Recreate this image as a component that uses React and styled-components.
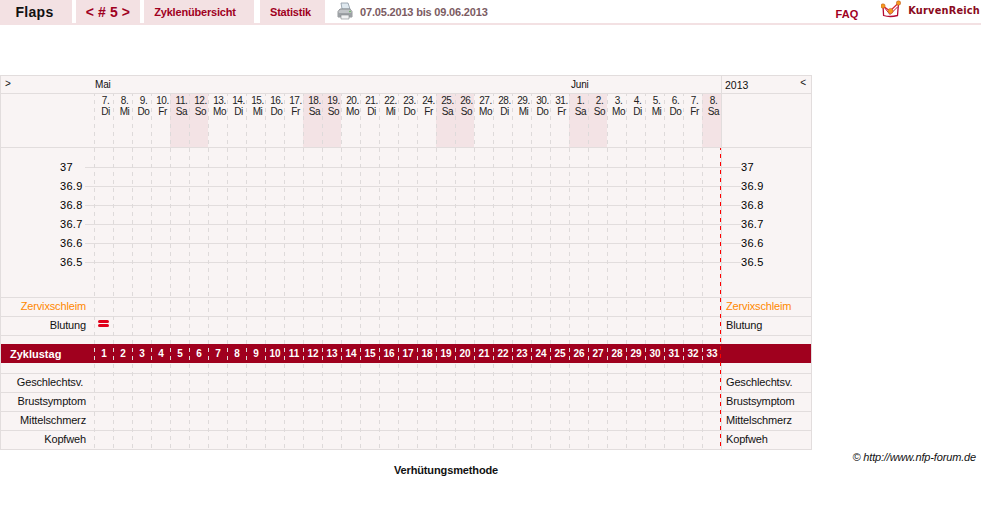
import React from 'react';
import styled, { createGlobalStyle } from 'styled-components';

const Global = createGlobalStyle`
  html, body { margin: 0; padding: 0; background: #fff; }
  body { font-family: "Liberation Sans", Arial, sans-serif; font-size: 11px; color: #111; }
`;
const Page = styled.div`width: 981px; height: 529px; overflow: hidden;`;
const TopBar = styled.header`
  display: flex; align-items: stretch; height: 23px;
  border-bottom: 2px solid #f3e1e3; margin-bottom: 50px;
`;
const Tab = styled.a`
  display: flex; align-items: center; justify-content: center;
  box-sizing: border-box; padding-right: ${p => p.$pr || 0}px;
  width: ${p => p.$w}px; margin-right: ${p => p.$gap}px;
  background: #f3e1e3; color: ${p => p.$dark ? '#111' : '#a0001e'};
  font-weight: bold; font-size: ${p => p.$size || 11}px;
  letter-spacing: ${p => p.$ls || 0}px;
`;
const PrinterWrap = styled.div`display: flex; align-items: center; margin-left: 12px; margin-right: 7px;`;
const Range = styled.span`
  align-self: center; font-weight: bold; color: #7b5b62; font-size: 11px; letter-spacing: -0.18px;
`;
const Spacer = styled.div`flex: 1;`;
const Faq = styled.a`
  align-self: flex-end; color: #a0001e; font-weight: bold; font-size: 11px;
  margin-right: 23px; margin-bottom: 3px;
`;
const Logo = styled.div`display: flex; align-items: flex-start; margin-right: 1px;`;
const LogoText = styled.span`
  font-family: "DejaVu Sans", sans-serif; font-weight: bold; font-size: 9.8px; color: #8a0a20;
  margin-left: 7px; margin-top: 5px; letter-spacing: 0.2px;
`;

const Table = styled.div`
  position: relative; box-sizing: border-box; width: 812px;
  border: 1px solid #e2dddd; border-bottom: none; background: #f9f4f4;
`;
const Row = styled.div`
  display: grid; grid-template-columns: 93px repeat(33, 19px) 90px;
  height: ${p => p.$h}px; box-sizing: border-box;
  border-bottom: ${p => p.$noline ? 'none' : '1px solid #e2dddd'};
  background: ${p => p.$red ? '#a0001e' : 'transparent'};
  ${p => p.$red ? 'color:#fff;font-weight:bold;' : ''}
`;
const Side = styled.div`
  display: flex; align-items: center; font-size: 11px; white-space: pre;
  letter-spacing: -0.15px;
  color: ${p => p.$orange ? '#ff8800' : 'inherit'};
  justify-content: ${p => p.$end ? 'flex-start' : 'flex-end'};
  padding: ${p => p.$end ? '0 0 2px 4px' : '0 8px 2px 0'};
  box-sizing: border-box;
  ${p => p.$end ? 'border-left: 1px solid #e2dddd;' : ''}
`;
const Band = styled.div`grid-column: 35; border-left: 1px solid #e2dddd;`;
const RedTitle = styled.div`display: flex; align-items: center; padding-left: 9px; font-size: 11px;`;
const Cell = styled.div`display: flex; align-items: center; justify-content: center;`;
const NumCell = styled(Cell)`font-size: 10px; padding-left: 1px;`;
const Corner = styled.div`display: flex; align-items: flex-start; padding: 2px 0 0 4px; font-size: 10px;`;
const MonthRow = styled.div`
  display: flex; grid-column: 2 / span 33; font-size: 10px; letter-spacing: -0.2px; align-items: center;
`;
const Month = styled.span`width: ${p => p.$w}px; padding-left: 1px;`;
const YearCell = styled.div`
  display: flex; justify-content: space-between; align-items: center; padding: 0 5px 0 3px;
  border-left: 1px solid #e2dddd; font-size: 10.5px;
`;
const Arrow = styled.span`font-size: 10px; margin-top: -4px;`;
const DayCell = styled.div`
  display: flex; flex-direction: column; align-items: center; padding: 1px 0 0 4px;
  font-size: 10px; line-height: 11px; letter-spacing: -0.45px; color: #222;
  background: ${p => p.$we ? '#f3e3e5' : 'transparent'};
`;
const Chart = styled.div`
  height: 150px; box-sizing: border-box; padding-top: 10px; border-bottom: 1px solid #e2dddd;
  position: relative;
`;
const TempRow = styled.div`
  display: flex; align-items: center; height: 19px; font-size: 11px; letter-spacing: 0.3px; color: #000;
`;
const TempLeft = styled.div`width: 84px; padding: 0 0 2px 59px; box-sizing: border-box;`;
const TempRight = styled.div`width: 70px; padding-bottom: 2px; box-sizing: border-box;`;
const TempLine = styled.div`flex: 1; height: 1px; background: #e2dddd;`;
const ChartEdge = styled.div`position: absolute; left: 720px; top: 0; bottom: 0; width: 1px; background: #e2dddd;`;
const Dashes = styled.div`
  position: absolute; left: 93px; top: 18px; bottom: 0; display: flex; pointer-events: none;
`;
const DashCol = styled.div`
  width: 19px;
  background-image: repeating-linear-gradient(to bottom, #dedada 0 2px, transparent 2px 6px, #dedada 6px 8px);
  background-size: 1px 100%; background-repeat: no-repeat;
`;
const Today = styled.div`
  position: absolute; left: 719px; top: 72px; bottom: 0; width: 1px; pointer-events: none;
  background-image: repeating-linear-gradient(to bottom, #f00 0 2px, transparent 2px 6px, #f00 6px 8px);
`;
const Bleed = styled.div`
  display: flex; flex-direction: column; gap: 1px; margin-bottom: 6px;
`;
const BleedBar = styled.span`display: block; width: 11px; height: 3px; border-radius: 2px; background: #e0001a;`;
const Copyright = styled.div`
  width: 976px; text-align: right; font-style: italic; font-size: 11px; margin-top: 1px; line-height: 13px;
  letter-spacing: -0.15px;
`;
const Method = styled.div`
  width: 892px; text-align: center; font-weight: bold; font-size: 11px; line-height: 13px;
  letter-spacing: -0.13px;
`;

const Printer = () => (
  <svg width="16" height="19" viewBox="0 0 16 19">
    <path d="M4 1h7l2 6H5z" fill="#dfe9f0" stroke="#8a97a3" strokeWidth="0.8" />
    <path d="M1 9.5 3 7h10l2 2.5V15H1z" fill="#c2c5c8" stroke="#7c8084" strokeWidth="0.8" />
    <path d="M1 11h14v4H1z" fill="#9da1a5" />
    <path d="M4 13h8v4H4z" fill="#f1f2f3" stroke="#84888c" strokeWidth="0.6" />
    <circle cx="13" cy="9.6" r="0.8" fill="#59b04f" />
  </svg>
);
const Crown = () => (
  <svg width="20" height="20" viewBox="0 0 20 20">
    <path d="M2 6 2.6 15.5 Q9 17.5 16.5 15.5 L17.5 3" fill="none" stroke="#b40a32" strokeWidth="1.3" />
    <path d="M2 6 9 11 17.5 3" fill="none" stroke="#d8262e" strokeWidth="1.2" />
    <path d="M3 7 9 14.5 16.5 7" fill="none" stroke="#c0103a" strokeWidth="1" />
    <circle cx="2" cy="6" r="2.2" fill="#f59a1e" stroke="#b8501a" strokeWidth="0.5" />
    <circle cx="9.5" cy="11" r="2.6" fill="#f59a1e" stroke="#b8501a" strokeWidth="0.5" />
    <circle cx="17.5" cy="3" r="2.2" fill="#f59a1e" stroke="#b8501a" strokeWidth="0.5" />
  </svg>
);

const names = ['So', 'Mo', 'Di', 'Mi', 'Do', 'Fr', 'Sa'];
const days = Array.from({ length: 33 }, (_, i) => {
  const d = new Date(2013, 4, 7 + i);
  return { n: d.getDate(), w: names[d.getDay()], we: d.getDay() === 0 || d.getDay() === 6 };
});
const temps = ['37', '36.9', '36.8', '36.7', '36.6', '36.5'];
const blanks = Array.from({ length: 33 }, (_, i) => i);

const DataRow = ({ label, orange, trail = '', children, h = 19 }) => (
  <Row $h={h}>
    <Side $orange={orange}>{label + trail}</Side>
    {blanks.map(i => <Cell key={i}>{i === 0 ? children : null}</Cell>)}
    <Side $end $orange={orange}>{label}</Side>
  </Row>
);

export default function App() {
  return (
    <Page>
      <Global />
      <TopBar>
        <Tab $w={72} $gap={4} $dark $size={14} $ls={0.3} $pr={3}>Flaps</Tab>
        <Tab $w={64} $gap={4} $size={14} $ls={0.1}>&lt; # 5 &gt;</Tab>
        <Tab $w={110} $gap={6} $ls={-0.18} $pr={8}>Zyklenübersicht</Tab>
        <Tab $w={65} $gap={0} $ls={-0.2} $pr={4}>Statistik</Tab>
        <PrinterWrap><Printer /></PrinterWrap>
        <Range>07.05.2013 bis 09.06.2013</Range>
        <Spacer />
        <Faq>FAQ</Faq>
        <Logo><Crown /><LogoText>KurvenReich</LogoText></Logo>
      </TopBar>
      <Table>
        <Row $h={18}>
          <Corner>&gt;</Corner>
          <MonthRow><Month $w={475}>Mai</Month><Month $w={100}>Juni</Month></MonthRow>
          <YearCell>2013<Arrow>&lt;</Arrow></YearCell>
        </Row>
        <Row $h={54}>
          <div />
          {days.map((d, i) => (
            <DayCell key={i} $we={d.we}><span>{d.n}.</span><span>{d.w}</span></DayCell>
          ))}
          <Side $end />
        </Row>
        <Chart>
          {temps.map(t => (
            <TempRow key={t}>
              <TempLeft>{t}</TempLeft>
              <TempLine />
              <TempRight>{t}</TempRight>
            </TempRow>
          ))}
          <ChartEdge />
        </Chart>
        <DataRow label="Zervixschleim" orange />
        <DataRow label="Blutung">
          <Bleed><BleedBar /><BleedBar /></Bleed>
        </DataRow>
        <Row $h={8} $noline>
          <Band />
        </Row>
        <Row $h={19} $red $noline>
          <RedTitle>Zyklustag</RedTitle>
          {blanks.map(i => <NumCell key={i}>{i + 1}</NumCell>)}
          <div />
        </Row>
        <Row $h={11}>
          <Band />
        </Row>
        <DataRow label="Geschlechtsv." trail={'\u00A0'} />
        <DataRow label="Brustsymptom" />
        <DataRow label="Mittelschmerz" />
        <DataRow label="Kopfweh" />
        <Dashes>{blanks.map(i => <DashCol key={i} />)}</Dashes>
        <Today />
      </Table>
      <Copyright>© http://www.nfp-forum.de</Copyright>
      <Method>Verhütungsmethode</Method>
    </Page>
  );
}
